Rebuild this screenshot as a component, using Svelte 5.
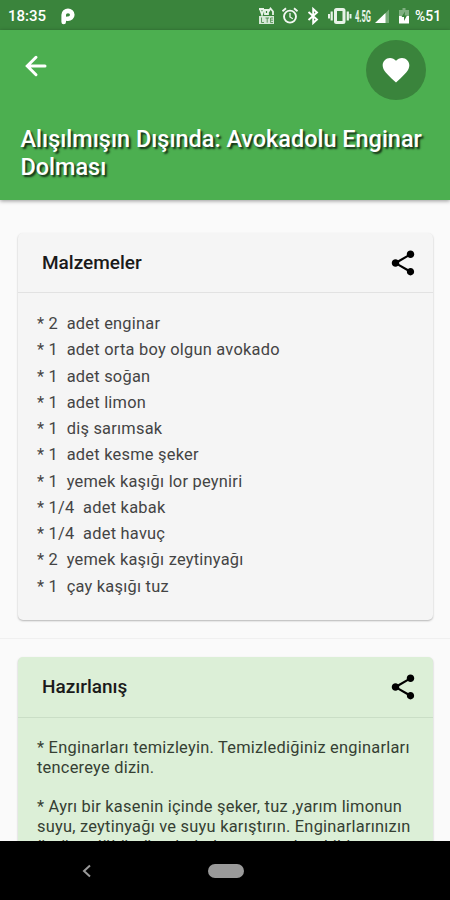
<script>

  const title = 'Alışılmışın Dışında: Avokadolu Enginar Dolması'

  const ingredients = [
    ['2', 'adet enginar'],
    ['1', 'adet orta boy olgun avokado'],
    ['1', 'adet soğan'],
    ['1', 'adet limon'],
    ['1', 'diş sarımsak'],
    ['1', 'adet kesme şeker'],
    ['1', 'yemek kaşığı lor peyniri'],
    ['1/4', 'adet kabak'],
    ['1/4', 'adet havuç'],
    ['2', 'yemek kaşığı zeytinyağı'],
    ['1', 'çay kaşığı tuz']
  ]

  const steps = [
    ['Enginarları temizleyin. Temizlediğiniz enginarları', 'tencereye dizin.'],
    ['Ayrı bir kasenin içinde şeker, tuz ,yarım limonun', 'suyu, zeytinyağı ve suyu karıştırın. Enginarlarınızın', 'üstüne döküp üzerlerinden geçecek şekilde']
  ]

</script>

{#snippet share()}
  <button class="share" aria-label="Paylaş">
    <svg width="30" height="30" viewBox="0 0 24 24">
      <path d="M18 16.08c-.76 0-1.44.3-1.96.77L8.91 12.7c.05-.23.09-.46.09-.7s-.04-.47-.09-.7l7.05-4.11c.54.5 1.25.81 2.04.81 1.66 0 3-1.34 3-3s-1.34-3-3-3-3 1.34-3 3c0 .24.04.47.09.7L8.04 9.81C7.5 9.31 6.79 9 6 9c-1.66 0-3 1.34-3 3s1.34 3 3 3c.79 0 1.5-.31 2.04-.81l7.12 4.16c-.05.21-.08.43-.08.65 0 1.61 1.31 2.92 2.92 2.92s2.92-1.31 2.92-2.92-1.31-2.92-2.92-2.92z" />
    </svg>
  </button>
{/snippet}

<div class="screen">
  <div class="status">
    <span class="clock">18:35</span>
    <svg class="app-mark" width="14" height="17" viewBox="0 0 14 17">
      <path d="M2.700 14V6.800a4.300 3.900 0 1 1 4.300 3.900H6" fill="none" stroke="#fff" stroke-width="4.600" stroke-linecap="round" />
    </svg>
    <svg class="status-icons" width="158" height="20" viewBox="0 0 158 20" fill="#e8f3e8">
      <!-- volte -->
      <g>
        <path d="M1 10h15v8H1z" opacity=".9" />
        <path d="M3.500 11.500v5h2.500M7.500 12h3.500M9.200 12v4.700M15 12h-2.400v4.600H15M12.600 14.200H15" fill="none" stroke="#3c843e" stroke-width=".8" />
        <path d="M1 3h5M2 3l2 5.500L6 3M7 4h3v4H7zM10.500 5.500l2-3 2.500 3V9" fill="none" stroke="#e8f3e8" stroke-width="1.800" />
      </g>
      <!-- alarm -->
      <g fill="none" stroke="#f2f8f2">
        <circle cx="32" cy="10.600" r="6" stroke-width="1.900" />
        <path d="M32 7v4l2.800 1.800" stroke-width="1.300" />
        <path d="M24.500 5.300l3.500-3M39.500 5.300l-3.500-3" stroke-width="1.800" />
      </g>
      <!-- bluetooth -->
      <path d="M50.500 6l8.500 7.500-3.800 3.500V3L59 6.500 50.500 14" fill="none" stroke="#fff" stroke-width="1.900" />
      <!-- vibrate -->
      <g fill="none" stroke="#e8f3e8">
        <rect x="77.500" y="3.500" width="8.500" height="13" rx="1" stroke-width="3" />
        <path d="M73.700 5.500v9M89.800 5.500v9" stroke-width="2.200" />
        <path d="M71 8v4.500M92.500 8v4.500" stroke-width="2" />
      </g>
      <text x="97" y="16" font-size="17" textLength="16" lengthAdjust="spacingAndGlyphs" font-weight="700">4.5G</text>
      <!-- signal -->
      <path d="M131 3.500V17H118z" opacity=".35" />
      <path d="M127.500 7v10h-10.500z" fill="#fff" />
      <!-- battery -->
      <g>
        <path d="M144.500 2h3v2h3.500v13h-10V4h3.500z" opacity=".4" />
        <path d="M141 10h10v7.500h-10z" fill="#fff" />
        <path d="M147 5.500l-3.500 5.500h2.500v4l3-5.500h-2.300z" fill="#3a843c" />
      </g>
    </svg>
    <span class="percent">%51</span>
  </div>

  <header>
    <div class="actions">
      <button class="back" aria-label="Geri">
        <svg width="30" height="30" viewBox="0 0 24 24">
          <path d="M19.200 12H5.500M12 5l-7 7 7 7" fill="none" stroke="#fff" stroke-width="2.400" stroke-linecap="round" />
        </svg>
      </button>
      <button class="favorite" aria-label="Favori">
        <svg width="32" height="32" viewBox="0 0 24 24">
          <path d="M12 21.350l-1.450-1.320C5.400 15.360 2 12.280 2 8.500 2 5.420 4.420 3 7.500 3c1.740 0 3.410.81 4.500 2.090C13.090 3.810 14.760 3 16.500 3 19.580 3 22 5.420 22 8.500c0 3.780-3.400 6.860-8.550 11.540L12 21.350z" fill="#fff" />
        </svg>
      </button>
    </div>
    <h1>{title}</h1>
  </header>

  <main>
    <section class="card">
      <div class="card-head">
        <h2>Malzemeler</h2>
        {@render share()}
      </div>
      <ul>
        {#each ingredients as [amount, name]}
          <li>* {amount}&nbsp; {name}</li>
        {/each}
      </ul>
    </section>

    <hr />

    <section class="card green">
      <div class="card-head">
        <h2>Hazırlanış</h2>
        {@render share()}
      </div>
      <div class="steps">
        {#each steps as lines}
          <p>* {#each lines as line, i}{#if i > 0}<br />{/if}{line}{/each}</p>
        {/each}
      </div>
    </section>
  </main>

  <nav>
    <svg class="nav-back" width="10" height="14" viewBox="0 0 10 14">
      <path d="M8 1.500L2 7l6 5.500" fill="none" stroke="#9a9a9a" stroke-width="2" />
    </svg>
    <span class="home"></span>
  </nav>
</div>

<style>

  :global(body) {
    background: #fafafa;
  }

  .screen {
    display: flex;
    flex-direction: column;
    width: 450px;
    height: 900px;
    overflow: hidden;
    background: #fafafa;
    font-family: Roboto, "Liberation Sans", sans-serif;
  }

  button {
    display: flex;
    align-items: center;
    justify-content: center;
    padding: 0;
    border: none;
    background: none;
  }

  .status {
    display: flex;
    align-items: center;
    flex: none;
    height: 30px;
    box-sizing: border-box;
    padding: 2px 8px 0 8px;
    background: #3a843c;
    color: #fff;
  }

  .clock {
    width: 53px;
    font-size: 15px;
    font-weight: 500;
  }

  .status-icons {
    margin-left: auto;
  }

  .percent {
    width: 27px;
    margin-left: -1px;
    font-size: 14px;
    font-weight: 500;
    white-space: nowrap;
  }

  header {
    flex: none;
    height: 170px;
    background: #4caf50;
    box-shadow: 0 1px 4px rgba(0, 0, 0, 0.4);
    z-index: 1;
  }

  .actions {
    display: flex;
    justify-content: space-between;
    padding: 10px 24.500px 0 21px;
  }

  .back {
    height: 30px;
    margin-top: 11px;
  }

  .favorite {
    width: 60px;
    height: 60px;
    border-radius: 50%;
    background: #3a843c;
  }

  h1 {
    margin: 25px 0 0 20.500px;
    color: #fff;
    font-size: 23.450px;
    font-weight: 500;
    line-height: 28px;
    text-shadow: 2px 2px 2px rgba(0, 0, 0, 0.75);
  }

  main {
    flex: 1;
    min-height: 0;
    overflow: hidden;
    padding-top: 33px;
  }

  .card {
    margin: 0 17px 0 18px;
    border-radius: 5px;
    background: #f5f5f5;
    box-shadow: 0 1px 2px rgba(0, 0, 0, 0.28);
  }

  .card-head {
    display: flex;
    align-items: center;
    justify-content: space-between;
    height: 59px;
    padding: 0 15px 0 24px;
    border-bottom: 1px solid #e2e2e2;
  }

  h2 {
    margin: 0;
    color: #1a1a1a;
    font-size: 19px;
    font-weight: 500;
  }

  ul {
    margin: 0;
    padding: 18px 0 20px 19px;
    list-style: none;
  }

  li {
    color: #444;
    font-size: 16.400px;
    letter-spacing: 0.240px;
    line-height: 26.250px;
  }

  hr {
    height: 1px;
    margin: 18px 0 17px 0;
    border: none;
    background: #f0f0f0;
  }

  .green {
    margin-top: 18px;
    background: #dcefd7;
  }

  .green .card-head {
    height: 60px;
    border-bottom-color: #cadec6;
  }

  .steps {
    padding: 20px 0 0 19px;
  }

  p {
    margin: 0 0 19px 0;
    color: #354033;
    font-size: 16.400px;
    letter-spacing: 0.240px;
    line-height: 20px;
    white-space: nowrap;
  }

  nav {
    display: flex;
    align-items: center;
    flex: none;
    height: 59px;
    background: #000;
  }

  .nav-back {
    margin-left: 82px;
  }

  .home {
    width: 36px;
    height: 14px;
    margin-left: 116px;
    border-radius: 7px;
    background: #9a9a9a;
  }
</style>
